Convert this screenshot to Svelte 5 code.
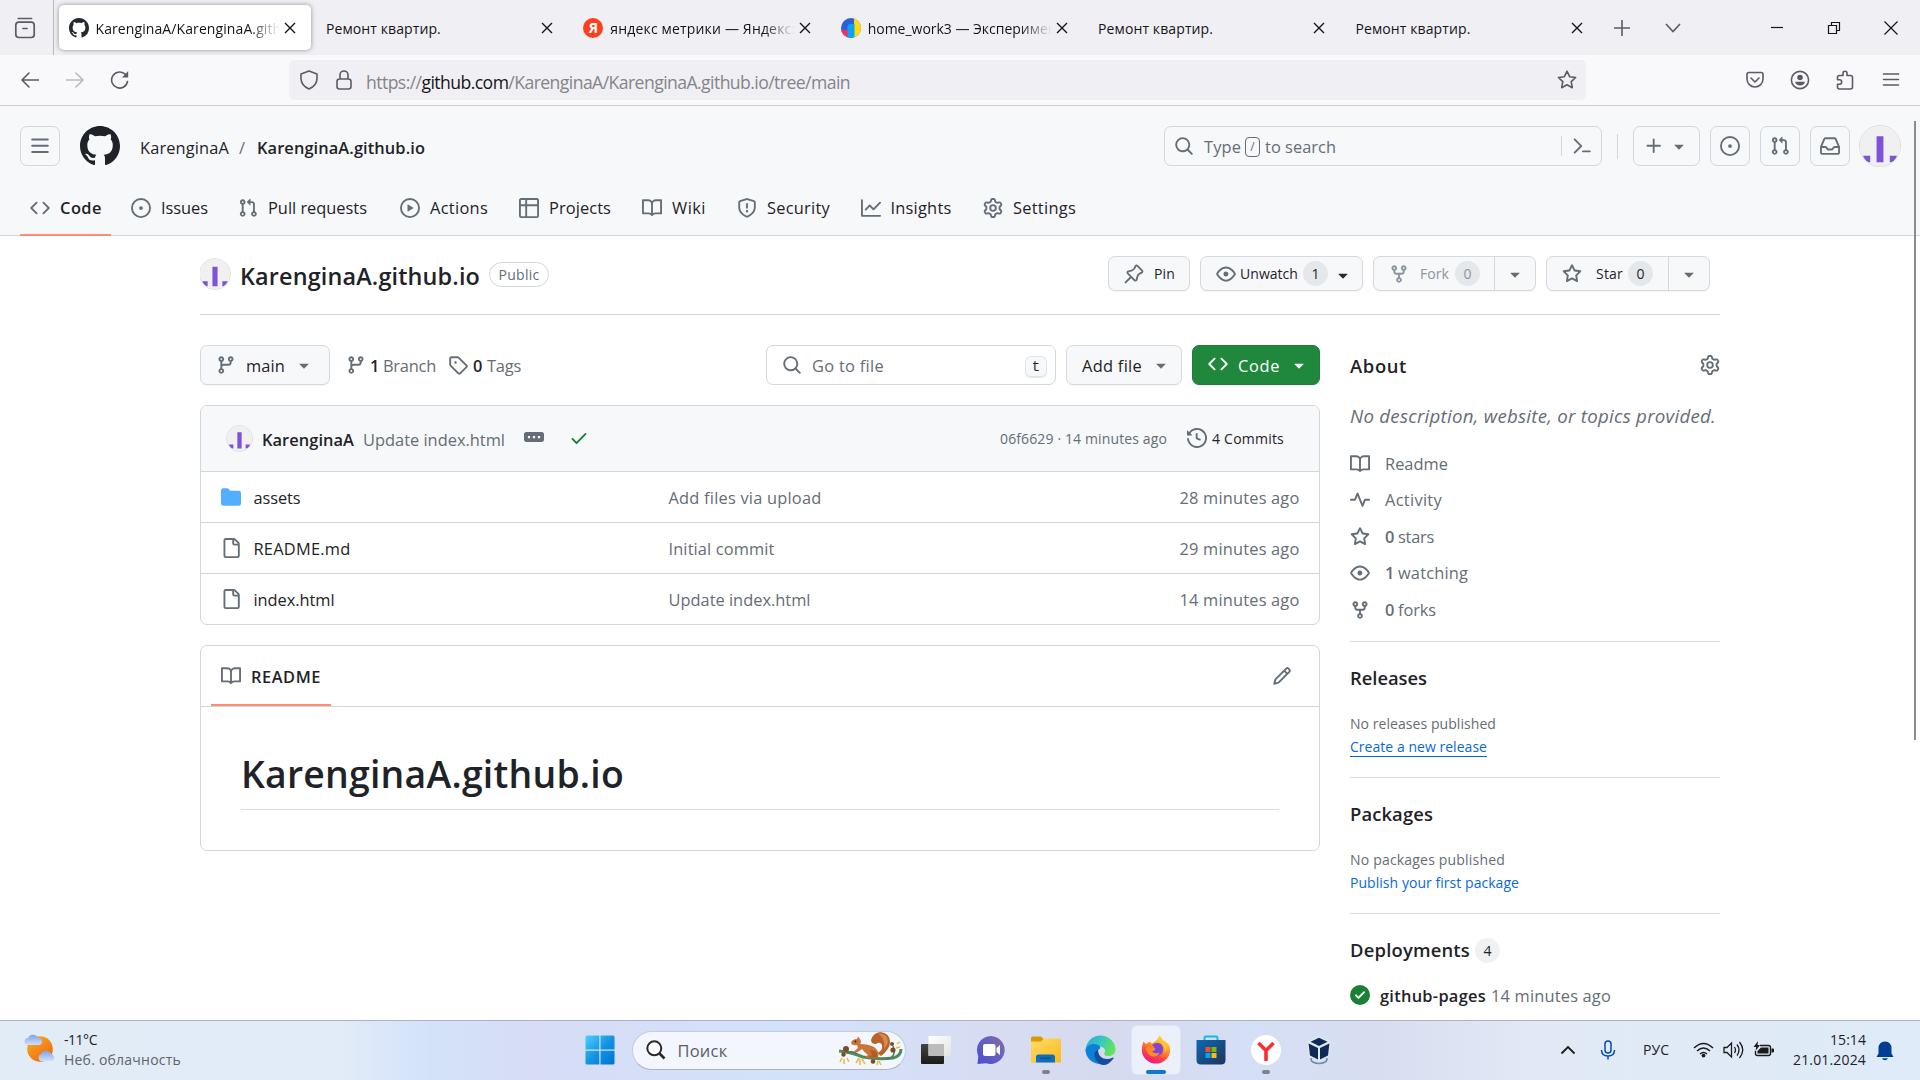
<script>
  function fit(node, width) {
    if (!width) return;
    const natural = node.getBoundingClientRect().width;
    const count = node.textContent.length;
    node.style.letterSpacing = (width - natural) / count + 'px';
    node.style.width = width + 'px';
  }

  const paths = {
    bars: 'M1 2.75A.75.75 0 0 1 1.75 2h12.5a.75.75 0 0 1 0 1.5H1.75A.75.75 0 0 1 1 2.75Zm0 5A.75.75 0 0 1 1.75 7h12.5a.75.75 0 0 1 0 1.5H1.75A.75.75 0 0 1 1 7.75ZM1.75 12h12.5a.75.75 0 0 1 0 1.5H1.75a.75.75 0 0 1 0-1.5Z',
    github: 'M8 0c4.42 0 8 3.58 8 8a8.013 8.013 0 0 1-5.45 7.59c-.4.08-.55-.17-.55-.38 0-.27.01-1.13.01-2.2 0-.75-.25-1.23-.54-1.48 1.78-.2 3.65-.88 3.65-3.95 0-.88-.31-1.59-.82-2.15.08-.2.36-1.02-.08-2.12 0 0-.67-.22-2.2.82-.64-.18-1.32-.27-2-.27-.68 0-1.36.09-2 .27-1.53-1.03-2.2-.82-2.2-.82-.44 1.1-.16 1.92-.08 2.12-.51.56-.82 1.28-.82 2.15 0 3.06 1.86 3.75 3.64 3.95-.23.2-.44.55-.51 1.07-.46.21-1.61.55-2.33-.66-.15-.24-.6-.83-1.23-.82-.67.01-.27.38.01.53.34.19.73.9.82 1.13.16.45.68 1.31 2.69.94 0 .67.01 1.3.01 1.49 0 .21-.15.45-.55.38A7.995 7.995 0 0 1 0 8c0-4.42 3.58-8 8-8Z',
    code: 'm11.28 3.22 4.25 4.25a.75.75 0 0 1 0 1.06l-4.25 4.25a.749.749 0 0 1-1.275-.326.749.749 0 0 1 .215-.734L13.94 8l-3.72-3.72a.749.749 0 0 1 .326-1.275.749.749 0 0 1 .734.215Zm-6.56 0a.751.751 0 0 1 1.042.018.751.751 0 0 1 .018 1.042L2.06 8l3.72 3.72a.749.749 0 0 1-.326 1.275.749.749 0 0 1-.734-.215L.47 8.53a.75.75 0 0 1 0-1.06Z',
    issue: 'M8 9.5a1.5 1.5 0 1 0 0-3 1.5 1.5 0 0 0 0 3ZM8 0a8 8 0 1 1 0 16A8 8 0 0 1 8 0ZM1.5 8a6.5 6.5 0 1 0 13 0 6.5 6.5 0 0 0-13 0Z',
    pr: 'M1.5 3.25a2.25 2.25 0 1 1 3 2.122v5.256a2.251 2.251 0 1 1-1.5 0V5.372A2.25 2.25 0 0 1 1.5 3.25Zm5.677-.177L9.573.677A.25.25 0 0 1 10 .854V2.5h1A2.5 2.5 0 0 1 13.5 5v5.628a2.251 2.251 0 1 1-1.5 0V5a1 1 0 0 0-1-1h-1v1.646a.25.25 0 0 1-.427.177L7.177 3.427a.25.25 0 0 1 0-.354ZM3.75 2.5a.75.75 0 1 0 0 1.5.75.75 0 0 0 0-1.5Zm0 9.5a.75.75 0 1 0 0 1.5.75.75 0 0 0 0-1.5Zm8.25.75a.75.75 0 1 0 1.5 0 .75.75 0 0 0-1.5 0Z',
    play: 'M8 0a8 8 0 1 1 0 16A8 8 0 0 1 8 0ZM1.5 8a6.5 6.5 0 1 0 13 0 6.5 6.5 0 0 0-13 0Zm4.879-2.773 4.264 2.559a.25.25 0 0 1 0 .428l-4.264 2.559A.25.25 0 0 1 6 10.559V5.442a.25.25 0 0 1 .379-.215Z',
    table: 'M0 1.75C0 .784.784 0 1.75 0h12.5C15.216 0 16 .784 16 1.75v12.5A1.75 1.75 0 0 1 14.25 16H1.75A1.75 1.75 0 0 1 0 14.25ZM6.5 6.5v8h7.75a.25.25 0 0 0 .25-.25V6.5Zm8-1.5V1.75a.25.25 0 0 0-.25-.25H6.5V5Zm-13 1.5v7.75c0 .138.112.25.25.25H5v-8ZM5 5V1.5H1.75a.25.25 0 0 0-.25.25V5Z',
    book: 'M0 1.75A.75.75 0 0 1 .75 1h4.253c1.227 0 2.317.59 3 1.501A3.743 3.743 0 0 1 11.006 1h4.245a.75.75 0 0 1 .75.75v10.5a.75.75 0 0 1-.75.75h-4.507a2.25 2.25 0 0 0-1.591.659l-.622.621a.75.75 0 0 1-1.06 0l-.622-.621A2.25 2.25 0 0 0 5.258 13H.75a.75.75 0 0 1-.75-.75Zm7.251 10.324.004-5.073-.002-2.253A2.25 2.25 0 0 0 5.003 2.5H1.5v9h3.757a3.75 3.75 0 0 1 1.994.574ZM8.755 4.75l-.004 7.322a3.752 3.752 0 0 1 1.992-.572H14.5v-9h-3.495a2.25 2.25 0 0 0-2.25 2.25Z',
    shield: 'M7.467.133a1.748 1.748 0 0 1 1.066 0l5.25 1.68A1.75 1.75 0 0 1 15 3.48V7c0 1.566-.32 3.182-1.303 4.682-.983 1.498-2.585 2.813-5.032 3.855a1.697 1.697 0 0 1-1.33 0c-2.447-1.042-4.049-2.357-5.032-3.855C1.32 10.182 1 8.566 1 7V3.48a1.755 1.755 0 0 1 1.217-1.667Zm.61 1.429a.25.25 0 0 0-.153 0l-5.25 1.68a.25.25 0 0 0-.174.238V7c0 1.358.275 2.666 1.057 3.86.784 1.194 2.121 2.34 4.366 3.297a.196.196 0 0 0 .154 0c2.245-.956 3.582-2.104 4.366-3.298C13.225 9.666 13.5 8.36 13.5 7V3.48a.251.251 0 0 0-.174-.237l-5.25-1.68ZM8.75 4.75v3a.75.75 0 0 1-1.5 0v-3a.75.75 0 0 1 1.5 0ZM9 10.5a1 1 0 1 1-2 0 1 1 0 0 1 2 0Z',
    graph: 'M1.5 1.75V13.5h13.75a.75.75 0 0 1 0 1.5H.75a.75.75 0 0 1-.75-.75V1.75a.75.75 0 0 1 1.5 0Zm14.28 2.53-5.25 5.25a.75.75 0 0 1-1.06 0L7 7.06 4.28 9.78a.751.751 0 0 1-1.042-.018.751.751 0 0 1-.018-1.042l3.25-3.25a.75.75 0 0 1 1.06 0L10 7.94l4.72-4.72a.751.751 0 0 1 1.042.018.751.751 0 0 1 .018 1.042Z',
    gear: 'M8 0a8.2 8.2 0 0 1 .701.031C9.444.095 9.99.645 10.16 1.29l.288 1.107c.018.066.079.158.212.224.231.114.454.243.668.386.123.082.233.09.299.071l1.103-.303c.644-.176 1.392.021 1.82.63.27.385.506.792.704 1.218.315.675.111 1.422-.364 1.891l-.814.806c-.049.048-.098.147-.088.294.016.257.016.515 0 .772-.01.147.038.246.088.294l.814.806c.475.469.679 1.216.364 1.891a7.977 7.977 0 0 1-.704 1.217c-.428.61-1.176.807-1.82.63l-1.102-.302c-.067-.019-.177-.011-.3.071a5.909 5.909 0 0 1-.668.386c-.133.066-.194.158-.211.224l-.29 1.106c-.168.646-.715 1.196-1.458 1.26a8.006 8.006 0 0 1-1.402 0c-.743-.064-1.289-.614-1.458-1.26l-.289-1.106c-.018-.066-.079-.158-.212-.224a5.738 5.738 0 0 1-.668-.386c-.123-.082-.233-.09-.299-.071l-1.103.303c-.644.176-1.392-.021-1.82-.63a8.12 8.12 0 0 1-.704-1.218c-.315-.675-.111-1.422.363-1.891l.815-.806c.05-.048.098-.147.088-.294a6.214 6.214 0 0 1 0-.772c.01-.147-.038-.246-.088-.294l-.815-.806C.635 6.045.431 5.298.746 4.623a7.92 7.92 0 0 1 .704-1.217c.428-.61 1.176-.807 1.82-.63l1.102.302c.067.019.177.011.3-.071.214-.143.437-.272.668-.386.133-.066.194-.158.211-.224l.29-1.106C6.009.645 6.556.095 7.299.03 7.53.01 7.764 0 8 0Zm-.571 1.525c-.036.003-.108.036-.137.146l-.289 1.105c-.147.561-.549.967-.998 1.189-.173.086-.34.183-.5.29-.417.278-.97.423-1.529.27l-1.103-.303c-.109-.03-.175.016-.195.045-.22.312-.412.644-.573.99-.014.031-.021.11.059.19l.815.806c.411.406.562.957.53 1.456a4.709 4.709 0 0 0 0 .582c.032.499-.119 1.05-.53 1.456l-.815.806c-.081.08-.073.159-.059.19.162.346.353.677.573.989.02.03.085.076.195.046l1.102-.303c.56-.153 1.113-.008 1.53.27.161.107.328.204.501.29.447.222.85.629.997 1.189l.289 1.105c.029.109.101.143.137.146a6.6 6.6 0 0 0 1.142 0c.036-.003.108-.036.137-.146l.289-1.105c.147-.561.549-.967.998-1.189.173-.086.34-.183.5-.29.417-.278.97-.423 1.529-.27l1.103.303c.109.029.175-.016.195-.045.22-.313.411-.644.573-.99.014-.031.021-.11-.059-.19l-.815-.806c-.411-.406-.562-.957-.53-1.456a4.709 4.709 0 0 0 0-.582c-.032-.499.119-1.05.53-1.456l.815-.806c.081-.08.073-.159.059-.19a6.464 6.464 0 0 0-.573-.989c-.02-.03-.085-.076-.195-.046l-1.102.303c-.56.153-1.113.008-1.53-.27a4.44 4.44 0 0 0-.501-.29c-.447-.222-.85-.629-.997-1.189l-.289-1.105c-.029-.11-.101-.143-.137-.146a6.6 6.6 0 0 0-1.142 0ZM11 8a3 3 0 1 1-6 0 3 3 0 0 1 6 0ZM9.5 8a1.5 1.5 0 1 0-3.001.001A1.5 1.5 0 0 0 9.5 8Z',
    search: 'M10.68 11.74a6 6 0 0 1-7.922-8.982 6 6 0 0 1 8.982 7.922l3.04 3.04a.749.749 0 0 1-.326 1.275.749.749 0 0 1-.734-.215ZM11.5 7a4.499 4.499 0 1 0-8.997 0A4.499 4.499 0 0 0 11.5 7Z',
    branch: 'M9.5 3.25a2.25 2.25 0 1 1 3 2.122V6A2.5 2.5 0 0 1 10 8.5H6a1 1 0 0 0-1 1v1.128a2.251 2.251 0 1 1-1.5 0V5.372a2.25 2.25 0 1 1 1.5 0v1.836A2.493 2.493 0 0 1 6 7h4a1 1 0 0 0 1-1v-.628A2.25 2.25 0 0 1 9.5 3.25Zm-6 0a.75.75 0 1 0 1.5 0 .75.75 0 0 0-1.5 0Zm8.25-.75a.75.75 0 1 0 0 1.5.75.75 0 0 0 0-1.5ZM4.25 12a.75.75 0 1 0 0 1.5.75.75 0 0 0 0-1.5Z',
    tag: 'M1 7.775V2.75C1 1.784 1.784 1 2.75 1h5.025c.464 0 .91.184 1.238.513l6.25 6.25a1.75 1.75 0 0 1 0 2.474l-5.026 5.026a1.75 1.75 0 0 1-2.474 0l-6.25-6.25A1.752 1.752 0 0 1 1 7.775Zm1.5 0c0 .066.026.13.073.177l6.25 6.25a.25.25 0 0 0 .354 0l5.025-5.025a.25.25 0 0 0 0-.354l-6.25-6.25a.25.25 0 0 0-.177-.073H2.75a.25.25 0 0 0-.25.25ZM6 5a1 1 0 1 1 0 2 1 1 0 0 1 0-2Z',
    pin: 'm11.294.984 3.722 3.722a1.75 1.75 0 0 1-.504 2.826l-1.327.613a3.089 3.089 0 0 0-1.707 2.084l-.584 2.454c-.317 1.332-1.972 1.8-2.94.832L5.75 11.311 1.78 15.28a.749.749 0 1 1-1.06-1.06l3.969-3.97-2.204-2.204c-.968-.968-.5-2.623.832-2.94l2.454-.584a3.08 3.08 0 0 0 2.084-1.707l.613-1.327a1.75 1.75 0 0 1 2.826-.504ZM6.283 9.723l2.732 2.731a.25.25 0 0 0 .42-.119l.584-2.454a4.586 4.586 0 0 1 2.537-3.098l1.328-.613a.25.25 0 0 0 .072-.404l-3.722-3.722a.25.25 0 0 0-.404.072l-.613 1.328a4.584 4.584 0 0 1-3.098 2.537l-2.454.584a.25.25 0 0 0-.119.42l2.731 2.732Z',
    eye: 'M8 2c1.981 0 3.671.992 4.933 2.078 1.27 1.091 2.187 2.345 2.637 3.023a1.62 1.62 0 0 1 0 1.798c-.45.678-1.367 1.932-2.637 3.023C11.67 13.008 9.981 14 8 14c-1.981 0-3.671-.992-4.933-2.078C1.797 10.83.88 9.576.43 8.898a1.62 1.62 0 0 1 0-1.798c.45-.677 1.367-1.931 2.637-3.022C4.33 2.992 6.019 2 8 2ZM1.679 7.932a.12.12 0 0 0 0 .136c.411.622 1.241 1.75 2.366 2.717C5.176 11.758 6.527 12.5 8 12.5c1.473 0 2.825-.742 3.955-1.715 1.124-.967 1.954-2.096 2.366-2.717a.12.12 0 0 0 0-.136c-.412-.621-1.242-1.75-2.366-2.717C10.824 4.242 9.473 3.5 8 3.5c-1.473 0-2.825.742-3.955 1.715-1.124.967-1.954 2.096-2.366 2.717ZM8 10a2 2 0 1 1-.001-3.999A2 2 0 0 1 8 10Z',
    fork: 'M5 5.372v.878c0 .414.336.75.75.75h4.5a.75.75 0 0 0 .75-.75v-.878a2.25 2.25 0 1 1 1.5 0v.878a2.25 2.25 0 0 1-2.25 2.25h-1.5v2.128a2.251 2.251 0 1 1-1.5 0V8.5h-1.5A2.25 2.25 0 0 1 3.5 6.25v-.878a2.25 2.25 0 1 1 1.5 0ZM5 3.25a.75.75 0 1 0-1.5 0 .75.75 0 0 0 1.5 0Zm6.75.75a.75.75 0 1 0 0-1.5.75.75 0 0 0 0 1.5Zm-3 8.75a.75.75 0 1 0-1.5 0 .75.75 0 0 0 1.5 0Z',
    star: 'M8 .25a.75.75 0 0 1 .673.418l1.882 3.815 4.21.612a.75.75 0 0 1 .416 1.279l-3.046 2.97.719 4.192a.751.751 0 0 1-1.088.791L8 12.347l-3.766 1.98a.75.75 0 0 1-1.088-.79l.72-4.194L.818 6.374a.75.75 0 0 1 .416-1.28l4.21-.611L7.327.668A.75.75 0 0 1 8 .25Zm0 2.445L6.615 5.5a.75.75 0 0 1-.564.41l-3.097.45 2.24 2.184a.75.75 0 0 1 .216.664l-.528 3.084 2.769-1.456a.75.75 0 0 1 .698 0l2.77 1.456-.53-3.084a.75.75 0 0 1 .216-.664l2.24-2.183-3.096-.45a.75.75 0 0 1-.564-.41L8 2.694Z',
    caret: 'm4.427 7.427 3.396 3.396a.25.25 0 0 0 .354 0l3.396-3.396A.25.25 0 0 0 11.396 7H4.604a.25.25 0 0 0-.177.427Z',
    plus: 'M7.75 2a.75.75 0 0 1 .75.75V7h4.25a.75.75 0 0 1 0 1.5H8.5v4.25a.75.75 0 0 1-1.5 0V8.5H2.75a.75.75 0 0 1 0-1.5H7V2.75A.75.75 0 0 1 7.75 2Z',
    inbox: 'M2.8 2.06A1.75 1.75 0 0 1 4.41 1h7.18c.7 0 1.333.417 1.61 1.06l2.74 6.395c.04.093.06.194.06.295v4.5A1.75 1.75 0 0 1 14.25 15H1.75A1.75 1.75 0 0 1 0 13.25v-4.5c0-.101.02-.202.06-.295Zm1.61.44a.25.25 0 0 0-.23.152L1.887 8H4.75a.75.75 0 0 1 .6.3L6.625 10h2.75l1.275-1.7a.75.75 0 0 1 .6-.3h2.863L11.82 2.652a.25.25 0 0 0-.23-.152Zm10.09 7h-2.875l-1.275 1.7a.75.75 0 0 1-.6.3h-3.5a.75.75 0 0 1-.6-.3L4.375 9.5H1.5v3.75c0 .138.112.25.25.25h12.5a.25.25 0 0 0 .25-.25Z',
    terminal: 'm6.354 8.04-4.773 4.773a.75.75 0 1 0 1.061 1.06L7.945 8.57a.75.75 0 0 0 0-1.06L2.642 2.206a.75.75 0 0 0-1.06 1.061L6.353 8.04ZM8.75 11.5a.75.75 0 0 0 0 1.5h5.5a.75.75 0 0 0 0-1.5h-5.5Z',
    file: 'M2 1.75C2 .784 2.784 0 3.75 0h6.586c.464 0 .909.184 1.237.513l2.914 2.914c.329.328.513.773.513 1.237v9.586A1.75 1.75 0 0 1 13.25 16h-9.5A1.75 1.75 0 0 1 2 14.25Zm1.75-.25a.25.25 0 0 0-.25.25v12.5c0 .138.112.25.25.25h9.5a.25.25 0 0 0 .25-.25V6h-2.75A1.75 1.75 0 0 1 9 4.25V1.5Zm6.75.062V4.25c0 .138.112.25.25.25h2.688l-.011-.013-2.914-2.914-.013-.011Z',
    folder: 'M1.75 1A1.75 1.75 0 0 0 0 2.75v10.5C0 14.216.784 15 1.75 15h12.5A1.75 1.75 0 0 0 16 13.25v-8.5A1.75 1.75 0 0 0 14.25 3H7.5a.25.25 0 0 1-.2-.1l-.9-1.2C6.07 1.26 5.55 1 5 1H1.75Z',
    check: 'M13.78 4.22a.75.75 0 0 1 0 1.06l-7.25 7.25a.75.75 0 0 1-1.06 0L2.22 9.28a.751.751 0 0 1 .018-1.042.751.751 0 0 1 1.042-.018L6 10.94l6.72-6.72a.75.75 0 0 1 1.06 0Z',
    history: 'm.427 1.927 1.215 1.215a8.002 8.002 0 1 1-1.6 5.685.75.75 0 1 1 1.493-.154 6.5 6.5 0 1 0 1.18-4.458l1.358 1.358A.25.25 0 0 1 3.896 6H.25A.25.25 0 0 1 0 5.75V2.104a.25.25 0 0 1 .427-.177ZM7.75 4a.75.75 0 0 1 .75.75v2.992l2.028.812a.75.75 0 0 1-.557 1.392l-2.5-1A.751.751 0 0 1 7 8.25v-3.5A.75.75 0 0 1 7.75 4Z',
    pencil: 'M11.013 1.427a1.75 1.75 0 0 1 2.474 0l1.086 1.086a1.75 1.75 0 0 1 0 2.474l-8.61 8.61c-.21.21-.47.364-.756.445l-3.251.93a.75.75 0 0 1-.927-.928l.929-3.25c.081-.286.235-.547.445-.758l8.61-8.61Zm.176 4.823L9.75 4.81l-6.286 6.287a.253.253 0 0 0-.064.108l-.558 1.953 1.953-.558a.253.253 0 0 0 .108-.064Zm1.238-3.763a.25.25 0 0 0-.354 0L10.811 3.75l1.439 1.44 1.263-1.263a.25.25 0 0 0 0-.354Z',
    pulse: 'M6 2c.306 0 .582.187.696.471L10 10.731l1.304-3.26A.751.751 0 0 1 12 7h3.25a.75.75 0 0 1 0 1.5h-2.742l-1.812 4.528a.751.751 0 0 1-1.392 0L6 4.77 4.696 8.03A.75.75 0 0 1 4 8.5H.75a.75.75 0 0 1 0-1.5h2.742l1.812-4.529A.751.751 0 0 1 6 2Z',
    done: 'M8 16A8 8 0 1 1 8 0a8 8 0 0 1 0 16Zm3.78-9.72a.751.751 0 0 0-.018-1.042.751.751 0 0 0-1.042-.018L6.75 9.19 5.28 7.72a.751.751 0 0 0-1.042.018.751.751 0 0 0-.018 1.042l2 2a.75.75 0 0 0 1.06 0Z',
    ellipsis: 'M1.75 4h12.5C15.2 4 16 4.8 16 5.75v4.5C16 11.2 15.2 12 14.25 12H1.75C.8 12 0 11.2 0 10.25v-4.5C0 4.8.8 4 1.75 4ZM3.1 7.1v1.8h1.8V7.1Zm4 0v1.8h1.8V7.1Zm4 0v1.8h1.8V7.1Z'
  };

  const tabs = [
    { title: 'KarenginaA/KarenginaA.github.io', icon: 'gh', active: true, w: 219 },
    { title: 'Ремонт квартир.', w: 115 },
    { title: 'яндекс метрики — Яндекс:', icon: 'ya', w: 185 },
    { title: 'home_work3 — Эксперимен', icon: 'metrica', w: 189 },
    { title: 'Ремонт квартир.', w: 115 },
    { title: 'Ремонт квартир.', w: 115 }
  ];

  // `span` is the whole width of the item in the navigation row.
  const nav = [
    { icon: 'code', label: 'Code', w: 42, span: 101, active: true },
    { icon: 'issue', label: 'Issues', w: 47, span: 107 },
    { icon: 'pr', label: 'Pull requests', w: 99, span: 162 },
    { icon: 'play', label: 'Actions', w: 58, span: 119 },
    { icon: 'table', label: 'Projects', w: 62, span: 123 },
    { icon: 'book', label: 'Wiki', w: 34, span: 95 },
    { icon: 'shield', label: 'Security', w: 63, span: 123.5 },
    { icon: 'graph', label: 'Insights', w: 61, span: 122.5 },
    { icon: 'gear', label: 'Settings', w: 63, span: 103 }
  ];

  const files = [
    { icon: 'folder', name: 'assets', nw: 47, msg: 'Add files via upload', mw: 153, ago: '28 minutes ago', aw: 120 },
    { icon: 'file', name: 'README.md', nw: 97, msg: 'Initial commit', mw: 106, ago: '29 minutes ago', aw: 120 },
    { icon: 'file', name: 'index.html', nw: 81, msg: 'Update index.html', mw: 142, ago: '14 minutes ago', aw: 120 }
  ];

  const facts = [
    { icon: 'book', label: 'Readme', w: 63 },
    { icon: 'pulse', label: 'Activity', w: 57 },
    { icon: 'star', count: '0', label: 'stars', w: 36 },
    { icon: 'eye', count: '1', label: 'watching', w: 70 },
    { icon: 'fork', count: '0', label: 'forks', w: 38 }
  ];
</script>

{#snippet ico(name, cls = '')}
  <svg class="ico {cls}" viewBox="0 0 16 16"><path fill-rule="evenodd" d={paths[name]} /></svg>
{/snippet}

{#snippet tx(text, w, cls = '')}
  <span class="t {cls}" use:fit={w}>{text}</span>
{/snippet}

{#snippet avatar(cls)}
  <svg class="avatar {cls}" viewBox="0 0 42 42">
    <rect width="42" height="42" fill="#f0f0f0" />
    <path d="M17.4 10.7h7.2V38h-7.2zM3.5 31.2h7.2V38H3.5zM31.3 31.2h7.2V38h-7.2z" fill="#7f50d8" />
  </svg>
{/snippet}

<div class="screen">
  <div class="tabbar">
    <div class="view">
      <svg class="i22" viewBox="0 0 22 22"><g fill="none" stroke="#5b5b66" stroke-width="1.7" stroke-linecap="round" stroke-linejoin="round"><path d="M4.3 1.5h13.2M1.8 8.2q0-3 3-3h12.4q3 0 3 3v9.3q0 3-3 3H4.8q-3 0-3-3zM9 11.5h4" /></g></svg>
    </div>
    {#each tabs as tab}
      <div class="tab" class:active={tab.active}>
        {#if tab.icon === 'gh'}
          <span class="fav">{@render ico('github', 'dark')}</span>
        {:else if tab.icon === 'ya'}
          <span class="fav ya"><b>Я</b></span>
        {:else if tab.icon === 'metrica'}
          <svg class="fav metrica" viewBox="0 0 20 20"><rect width="20" height="20" fill="#2f61d5" /><path d="M13 0h7v20h-7z" fill="#ffdb0f" /><path d="M0 12h7v8H0z" fill="#ff2d55" /><path d="M6.500 20V9q0-3 3-3h4v14z" fill="#06a4fb" /></svg>
        {/if}
        <span class="title" class:fade={tab.icon}>{@render tx(tab.title, tab.w)}</span>
        <svg class="close" viewBox="0 0 12 12"><path d="M1 1l10 10M11 1L1 11" /></svg>
      </div>
    {/each}
    <div class="cell c43"><svg class="line" width="16" height="16" viewBox="0 0 16 16"><path d="M8 0v16M0 8h16" /></svg></div>
    <div class="cell c59"><svg class="line" width="16" height="10" viewBox="0 0 16 10"><path d="M1 1l7 7.5L15 1" /></svg></div>
    <div class="window">
      <svg width="14" height="14" viewBox="0 0 14 14"><path d="M1 6.5h12" /></svg>
      <svg width="14" height="14" viewBox="0 0 14 14"><path d="M1.5 4.5h8v8h-8zM4.5 4.5v-3h8v8h-3" /></svg>
      <svg width="14" height="14" viewBox="0 0 14 14"><path d="M.5.5l13 13M13.500.5l-13 13" /></svg>
    </div>
  </div>

  <div class="toolbar">
    <div class="nav-buttons">
      <svg width="18" height="16" viewBox="0 0 18 16"><path d="M17.500 8H1M8 1L1 8l7 7" /></svg>
      <svg class="off" width="18" height="16" viewBox="0 0 18 16"><path d="M.5 8H17M10 1l7 7-7 7" /></svg>
      <svg width="20" height="20" viewBox="0 0 20 20"><path d="M17.500 11.500A8 8 0 1 1 14.500 3.700L16 5" /><path class="solid" d="M18.200 1v6.600H12z" /></svg>
    </div>
    <div class="url">
      <svg class="shieldy" width="20" height="20" viewBox="0 0 20 20"><path d="M10 1l8 3v4.500c0 4-2.500 8-8 10.500C4.500 16.500 2 12.500 2 8.500V4z" /></svg>
      <svg width="16" height="20" viewBox="0 0 16 20"><path d="M4 9V5a4 4 0 0 1 8 0v4M1 11.500Q1 9 3.500 9h9Q15 9 15 11.500v5q0 2.500-2.500 2.500h-9Q1 19 1 16.500z" /></svg>
      <span class="t address" use:fit={484}>https://<b>github.com</b>/KarenginaA/KarenginaA.github.io/tree/main</span>
      <svg class="fav-star" width="20" height="20" viewBox="0 0 20 20"><path d="M10 1.200l2.600 5.500 6 .800-4.400 4.200 1.100 6-5.300-2.900-5.300 2.900 1.100-6L1.400 7.500l6-.800z" /></svg>
    </div>
    <div class="tools">
      <svg width="20" height="20" viewBox="0 0 20 20"><path d="M4 2.500h12q2 0 2 2V9a8 8 0 0 1-16 0V4.500q0-2 2-2zM6 8l4 4 4-4" /></svg>
      <svg width="20" height="20" viewBox="0 0 20 20"><circle cx="10" cy="10" r="8.600" /><circle class="solid" cx="10" cy="7.500" r="2.800" /><path class="solid" d="M5 11.800h10q-1 3.800-5 3.800t-5-3.800z" /></svg>
      <svg width="20" height="20" viewBox="0 0 20 20"><path d="M2.500 7.500q0-2 2-2H8V3.300a2 2 0 0 1 4 0v2.200h3.500q2 0 2 2V17q0 2-2 2h-11q-2 0-2-2v-2.800h2a2.200 2.200 0 0 0 0-4.400h-2z" /></svg>
      <svg width="20" height="20" viewBox="0 0 20 20"><path d="M2.500 4h15M2.500 9.500h15M2.500 15h15" /></svg>
    </div>
  </div>

  <header>
    <div class="top">
      <div class="sq">{@render ico('bars')}</div>
      {@render ico('github', 'logo')}
      <div class="crumb">
        {@render tx('KarenginaA', 89)}
        {@render tx('/', 8, 'muted')}
        {@render tx('KarenginaA.github.io', 168, 'semi')}
      </div>
      <div class="search">
        {@render ico('search')}
        {@render tx('Type', 37, 'muted')}
        <span class="slash">/</span>
        {@render tx('to search', 71, 'muted')}
        <span class="cmd">{@render ico('terminal')}</span>
      </div>
      <div class="vline"></div>
      <div class="sq add">{@render ico('plus')}{@render ico('caret')}</div>
      <div class="sq">{@render ico('issue')}</div>
      <div class="sq">{@render ico('pr')}</div>
      <div class="sq">{@render ico('inbox')}</div>
      {@render avatar('a41')}
    </div>
    <nav>
      {#each nav as item}
        <div class="slot" style:width="{item.span}px">
          <div class="item" class:on={item.active}>
            {@render ico(item.icon)}
            {@render tx(item.label, item.w, item.active ? 'semi' : '')}
          </div>
        </div>
      {/each}
    </nav>
  </header>

  <main>
    <div class="repo">
      {@render avatar('a31')}
      {@render tx('KarenginaA.github.io', 240, 'name')}
      <span class="pill">{@render tx('Public', 41, 'small muted')}</span>
      <div class="actions">
        <div class="btn pin">{@render ico('pin')}{@render tx('Pin', 21, 'small')}</div>
        <div class="btn watch">{@render ico('eye')}{@render tx('Unwatch', 58, 'small')}<span class="count">1</span>{@render ico('caret', 'dark')}</div>
        <div class="btn split">
          <div class="half dim">{@render ico('fork')}{@render tx('Fork', 29, 'small')}<span class="count">0</span></div>
          <div class="drop">{@render ico('caret')}</div>
        </div>
        <div class="btn split">
          <div class="half starred">{@render ico('star')}{@render tx('Star', 27, 'small')}<span class="count">0</span></div>
          <div class="drop">{@render ico('caret')}</div>
        </div>
      </div>
    </div>

    <div class="columns">
      <section class="left">
        <div class="bar">
          <div class="btn big branch">{@render ico('branch')}{@render tx('main', 39)}{@render ico('caret')}</div>
          <div class="refs">
            {@render ico('branch')}{@render tx('1', 10, 'semi')}{@render tx('Branch', 53, 'muted')}
            <span class="tagref">{@render ico('tag')}{@render tx('0', 10, 'semi')}{@render tx('Tags', 34, 'muted')}</span>
          </div>
          <div class="goto">{@render ico('search')}{@render tx('Go to file', 72, 'muted')}<kbd>t</kbd></div>
          <div class="btn big addfile">{@render tx('Add file', 60)}{@render ico('caret')}</div>
          <div class="btn big green">{@render ico('code')}{@render tx('Code', 42)}{@render ico('caret')}</div>
        </div>

        <div class="box">
          <div class="latest">
            {@render avatar('a27')}
            {@render tx('KarenginaA', 92, 'semi')}
            {@render tx('Update index.html', 142, 'muted')}
            {@render ico('ellipsis', 'dots')}
            {@render ico('check', 'ok')}
            <div class="right">
              {@render tx('06f6629 · 14 minutes ago', 167, 'small muted')}
              {@render ico('history')}
              {@render tx('4 Commits', 72, 'small')}
            </div>
          </div>
          {#each files as f}
            <div class="row">
              {@render ico(f.icon, f.icon)}
              <span class="fname">{@render tx(f.name, f.nw)}</span>
              <span class="fmsg">{@render tx(f.msg, f.mw, 'muted')}</span>
              {@render tx(f.ago, f.aw, 'muted')}
            </div>
          {/each}
        </div>

        <div class="box readme">
          <div class="rhead">
            <div class="rtab">{@render ico('book')}{@render tx('README', 70, 'semi')}</div>
            {@render ico('pencil')}
          </div>
          <div class="rbody">
            <h1>{@render tx('KarenginaA.github.io', 383, 'h1')}</h1>
          </div>
        </div>
      </section>

      <aside>
        <div class="about">{@render tx('About', 57, 'h2')}{@render ico('gear')}</div>
        <div class="desc">{@render tx('No description, website, or topics provided.', 366, 'ital muted')}</div>
        <ul>
          {#each facts as f}
            <li>
              {@render ico(f.icon)}
              {#if f.count}{@render tx(f.count, 10, 'semi muted')}{/if}
              {@render tx(f.label, f.w, 'muted')}
            </li>
          {/each}
        </ul>
        <div class="side">
          <div class="sh">{@render tx('Releases', 77, 'h2')}</div>
          <div class="sl">{@render tx('No releases published', 146, 'small muted')}</div>
          <div class="sl"><span class="under">{@render tx('Create a new release', 137, 'small link')}</span></div>
        </div>
        <div class="side">
          <div class="sh">{@render tx('Packages', 83, 'h2')}</div>
          <div class="sl">{@render tx('No packages published', 155, 'small muted')}</div>
          <div class="sl">{@render tx('Publish your first package', 169, 'small link')}</div>
        </div>
        <div class="side">
          <div class="sh">{@render tx('Deployments', 120, 'h2')}<span class="count pale">4</span></div>
          <div class="deploy">{@render ico('done', 'ok')}{@render tx('github-pages', 106, 'semi')}{@render tx('14 minutes ago', 120, 'muted')}</div>
        </div>
      </aside>
    </div>
  </main>
  <div class="scroll"></div>

  <footer>
    <div class="weather">
      <svg width="32" height="30" viewBox="0 0 32 30">
        <defs>
          <linearGradient id="sun" x1="0" y1="0" x2=".8" y2="1"><stop offset="0" stop-color="#f3b22c" /><stop offset="1" stop-color="#f2660c" /></linearGradient>
          <linearGradient id="cloud" x1="0" y1="0" x2="0" y2="1"><stop offset="0" stop-color="#7ea3e8" /><stop offset="1" stop-color="#d0dffa" /></linearGradient>
        </defs>
        <circle cx="16" cy="16" r="12.800" fill="url(#sun)" />
        <path d="M4 12a3.500 3.500 0 0 1 0-7 5.500 5.500 0 0 1 10 0 3.500 3.500 0 0 1 1 7z" fill="url(#cloud)" />
        <path d="M17 28a3.700 3.700 0 0 1 0-7 5.500 5.500 0 0 1 10 0 3.700 3.700 0 0 1 1 7z" fill="url(#cloud)" />
      </svg>
      <div class="wtext">
        {@render tx('-11°C', 33, 'small')}
        {@render tx('Неб. облачность', 117, 'small grey')}
      </div>
    </div>

    <div class="apps">
      <svg class="start" width="30" height="30" viewBox="0 0 30 30">
        <defs><linearGradient id="win" x1="0" y1="0" x2="1" y2="1"><stop offset="0" stop-color="#4fd0fb" /><stop offset=".5" stop-color="#1495e2" /><stop offset="1" stop-color="#0272d2" /></linearGradient></defs>
        <path d="M2 .5h12.300v14H.5V2Q.5.5 2 .5zM15.500.5H28Q29.500.5 29.500 2v12.500h-14zM.5 15.700h13.800v13.800H2Q.5 29.500.5 28zM15.500 15.700h14V28q0 1.500-1.500 1.500H15.500z" fill="url(#win)" />
      </svg>
      <div class="find">
        <svg width="20" height="20" viewBox="0 0 20 20"><circle cx="8.300" cy="8.300" r="7" fill="#fff" stroke="#2a2a2c" stroke-width="2" /><path d="M13.500 13.500l5 5" stroke="#2a2a2c" stroke-width="2.600" /></svg>
        {@render tx('Поиск', 50, 'grey search-word')}
        <svg class="squirrel" width="66" height="36" viewBox="0 0 66 36">
          <path d="M2 19Q14 20 26 25Q42 28 56 26Q64 24 64 17" fill="none" stroke="#4f8a5c" stroke-width="3" />
          <path d="M10 21Q16 18 20 22M50 27Q60 25 56 14" fill="none" stroke="#4d7b4a" stroke-width="1.500" />
          <path d="M40 21Q46 19 45 13Q43 9 39 12Q34 12 34 8Q36 1 43 0Q53 1 53 10Q53 17 44 24z" fill="#b9632a" />
          <path d="M41 1.500Q51 1 51 10Q50 14 47 17Q49 7 41 1.500z" fill="#d98a4c" />
          <path d="M14 11Q15 7 20 7L21 4.500 23 7Q25 10 23 12Q31 12 37 15Q43 19 41 26H30Q27 25 31 23Q27 20 25 17L20 20.500 17 19.500 21 16 20 13Q15 14 14 11z" fill="#c97537" />
          <path d="M33 18Q41 17 40.500 25.500H31Q32 23 35 23Z" fill="#b05c26" />
          <circle cx="18.500" cy="9.500" r=".9" fill="#222" />
          <g fill="#7a4b2a"><circle cx="9" cy="17" r="3" /><circle cx="6.500" cy="22.500" r="2.200" /><circle cx="36" cy="29.500" r="2.300" /><circle cx="55" cy="12" r="2" /><circle cx="56" cy="18" r="2.600" /></g>
          <g stroke="#e9b94e" stroke-width="1.500" fill="none"><path d="M5 26l-2 4M7 27l0 5M10 26l2 4M22 26l-3 5M23 27l0 6M25 27l3 5M42 29l2 4M41 29l-1 4M60 12l3-2M59 16l4-1" /></g>
        </svg>
      </div>
      <div class="app"><svg width="32" height="30" viewBox="0 0 32 30">
        <defs><linearGradient id="tv" x1="0" y1="0" x2="0" y2="1"><stop offset="0" stop-color="#44443f" /><stop offset="1" stop-color="#1b1b1b" /></linearGradient><linearGradient id="tw" x1="0" y1="0" x2="1" y2="1"><stop offset="0" stop-color="#fff" /><stop offset="1" stop-color="#e4e4e4" /></linearGradient></defs>
        <rect x="1" y="9" width="23" height="20" rx="1" fill="url(#tv)" /><rect x="8.500" y="1" width="22.500" height="20" rx="1" fill="url(#tw)" /><path d="M8.500 9H24v12H8.500z" fill="#bcbcbc" />
      </svg></div>
      <div class="app"><svg width="30" height="30" viewBox="0 0 30 30">
        <defs><linearGradient id="chat" x1="1" y1="0" x2="0" y2="1"><stop offset="0" stop-color="#8d6a98" /><stop offset=".4" stop-color="#6763c0" /><stop offset="1" stop-color="#4b4bd0" /></linearGradient></defs>
        <path d="M15 1a14 14 0 1 1-5 27.200L1.500 29l.8-8A14 14 0 0 1 15 1z" fill="url(#chat)" /><rect x="7" y="9" width="12.500" height="12" rx="2" fill="#fff" /><path d="M20.500 13l3.500-3v10l-3.500-3z" fill="#fff" />
      </svg></div>
      <div class="app"><svg width="32" height="30" viewBox="0 0 32 30">
        <defs><linearGradient id="fold" x1="0" y1="0" x2="1" y2="1"><stop offset="0" stop-color="#ffdc66" /><stop offset="1" stop-color="#fbb91d" /></linearGradient></defs>
        <path d="M1 3q0-1.500 1.500-1.500H11L13.500 4v6H1z" fill="#d99a04" /><path d="M1 6.500h10L14 3.500h15.500q1.500 0 1.500 1.500v22.500H1z" fill="url(#fold)" /><path d="M6 27.500V22q0-2.500 2.500-2.500h14Q25 19.500 25 22v5.500z" fill="#0a70bd" /><path d="M10.500 23.200h10" stroke="#1a4e80" stroke-width="1.400" />
      </svg><i class="dot"></i></div>
      <div class="app"><svg width="31" height="31" viewBox="0 0 31 31">
        <defs><linearGradient id="edge" x1="0" y1="0" x2="1" y2=".4"><stop offset="0" stop-color="#2aa7dd" /><stop offset=".5" stop-color="#35c4c9" /><stop offset="1" stop-color="#62e35c" /></linearGradient></defs>
        <path d="M15.500.5a15 15 0 0 1 15 13.500c0 4.500-3 7-7 7-3 0-5-1-4-3 1.500-3 0-6-5-6.500C8 11 2 14 .6 17A15 15 0 0 1 15.500.5z" fill="url(#edge)" />
        <path d="M.5 15.500C2 9.500 7.500 8 12 9.500c3.500 1.200 4 3.500 2.500 4.500-4 2-3.500 9 4 12 2 .8 4 .6 6 0A15 15 0 0 1 .5 15.500z" fill="#0c7fd9" />
        <path d="M13 14.500c-5 2-5 10 2 14.500 4 2.500 9 .5 13.500-5.500.4-.8-.2-1.200-1-.8-6 3-14.500 1-14.500-8.200z" fill="#104f9f" />
      </svg></div>
      <div class="app current"><svg width="30" height="30" viewBox="0 0 30 30">
        <defs><linearGradient id="ff" x1=".8" y1="0" x2=".3" y2="1"><stop offset="0" stop-color="#fff04a" /><stop offset=".35" stop-color="#ffa51f" /><stop offset=".7" stop-color="#ff4446" /><stop offset="1" stop-color="#e8148a" /></linearGradient></defs>
        <path d="M2.500 6.500L5 9Q7 7 9.500 6.500Q9 8 11 8.500Q15 7 17 3L18.500.5Q20 4 23 6.500L24 5.500Q25 7 26 8.500L27 8Q29.500 12 29.200 16A14.300 14.300 0 0 1 .8 16Q.8 10 2.500 6.500z" fill="url(#ff)" />
        <path d="M11 10Q15 6.500 20 9Q24 14 20.500 19Q15 23 10.500 19Q8 16 10 14L14 13.800Q13 11 11 10z" fill="#7c45d8" />
        <path d="M4.500 13Q8 10.500 10 13Q13 12 14.500 14Q13 16 11 16.500Q14 19.500 18.500 17.500Q17 22 12 21.500Q6 20 4.500 13z" fill="#ff8a2a" />
        <path d="M18.500.5Q17 6 21.500 9Q25 13 23 18Q27 15 25.500 10Z" fill="#ffc53a" />
      </svg><i class="line-on"></i></div>
      <div class="app"><svg width="30" height="30" viewBox="0 0 30 30">
        <defs><linearGradient id="store" x1="0" y1="0" x2="1" y2="1"><stop offset="0" stop-color="#0c68b5" /><stop offset="1" stop-color="#20345c" /></linearGradient></defs>
        <path d="M8.500 6V2.800Q8.500 1.500 10 1.500h10q1.500 0 1.500 1.300V6" fill="none" stroke="#19b5f0" stroke-width="2" /><path d="M.5 5h29v20q0 4.500-4.500 4.500H5Q.5 29.500.5 25z" fill="url(#store)" />
        <path d="M9.500 12h5v5h-5z" fill="#f05022" /><path d="M15.500 12h5v5h-5z" fill="#7dba00" /><path d="M9.500 18h5v5h-5z" fill="#05a6f0" /><path d="M15.500 18h5v5h-5z" fill="#ffba08" />
      </svg></div>
      <div class="app"><svg width="30" height="30" viewBox="0 0 30 30"><circle cx="15" cy="15" r="15" fill="#fff" /><path d="M7.500 8L15 15.500 22.500 8M15 15v11" fill="none" stroke="#f92e32" stroke-width="3.600" /></svg><i class="dot"></i></div>
      <div class="app nudge"><svg width="28" height="30" viewBox="0 0 28 30">
        <ellipse cx="14" cy="24.500" rx="8" ry="4" fill="none" stroke="#7488a8" stroke-width="1.600" /><path d="M14 1l12 5.500-1.500 15L14 27 3.500 21.500 2 6.500z" fill="#dfe7f2" /><path d="M14 2.800l8.500 4L14 11 5.500 6.800zM3.600 8.500L13 13v11.500L5 20.500zM24.400 8.500L15 13v11.500l8-4z" fill="#0e2b58" />
      </svg></div>
    </div>

    <div class="tray">
      <svg class="up" width="16" height="10" viewBox="0 0 16 10"><path d="M1.500 8.500L8 2l6.500 6.500" stroke-width="1.800" /></svg>
      <svg class="mic" width="16" height="20" viewBox="0 0 16 20"><path d="M8 1q3 0 3 3v6q0 3-3 3t-3-3V4q0-3 3-3zM1.500 10Q1.500 16 8 16t6.500-6M8 16v3.500" stroke-width="1.500" /></svg>
      {@render tx('РУС', 26, 'small lang')}
      <svg width="21" height="16" viewBox="0 0 21 16"><g stroke-width="1.500"><path d="M1 6q9.500-9 19 0M4 9q6.500-6 13 0M7 12q3.500-3 7 0" /></g><circle class="fill" cx="10.500" cy="13.600" r="1.900" /></svg>
      <svg width="21" height="18" viewBox="0 0 21 18"><path d="M1 6.500h3L8.500 2v14L4 11.500H1zM11.500 6q2 3 0 6M14 3.500q4 5.500 0 11M16.500 1q6.500 8 0 16" stroke-width="1.300" /></svg>
      <svg width="21" height="17" viewBox="0 0 21 17"><path d="M7 4.500h8.500q2 0 2 2v6q0 2-2 2h-11q-2 0-2-2V10" stroke-width="1.400" /><path class="fill" d="M8 6.500h7.500v6h-11V10zM18.500 7.500H20q1 0 1 1v2q0 1-1 1h-1.500zM5 0L.5 6h2.700L2.500 10l4.500-6H4.500z" /></svg>
      <div class="clock">
        {@render tx('15:14', 36, 'small')}
        {@render tx('21.01.2024', 73, 'small')}
      </div>
      <svg class="bell" width="18" height="20" viewBox="0 0 18 20"><path d="M9 .5q6.500.3 6.500 7v5L17.500 16H.5l2-3.500v-5q0-6.700 6.500-7zM6 17.300h6q-.8 2-3 2t-3-2z" /></svg>
    </div>
  </footer>
</div>

<style>
  :global(body) { margin: 0; }
  .screen {
    position: relative;
    width: 1920px;
    height: 1080px;
    overflow: hidden;
    display: flex;
    flex-direction: column;
    background: #fff;
    color: #1f2328;
    font-family: 'Open Sans', 'Noto Sans', sans-serif;
    font-size: 16.4px;
    line-height: 1.3;
  }
  .screen * { box-sizing: border-box; }
  svg { flex: none; display: block; }
  .t { display: inline-block; flex: none; white-space: pre; padding-top: 2px; }
  .small { font-size: 14px; }
  .semi { font-weight: 600; }
  .muted { color: #656d76; }
  .grey { color: #5a5d63; }
  .link { color: #0969da; }
  .ital { font-style: italic; font-size: 18.7px; }
  .name { font-size: 23.4px; font-weight: 600; }
  .h1 { font-size: 37.4px; font-weight: 600; }
  .h2 { font-size: 18.4px; font-weight: 600; }
  .ico { width: 20px; height: 20px; fill: #656d76; }
  .ico.dark { fill: #24292f; }
  .avatar { border-radius: 50%; border: 1px solid #dcdee1; }
  .a41 { width: 42px; height: 42px; }
  .a31 { width: 32px; height: 32px; }
  .a27 { width: 27px; height: 27px; }

  .tabbar { height: 55px; flex: none; display: flex; align-items: center; background: #f0eff4; color: #15141a; }
  .view { width: 54px; height: 55px; margin-right: 2.5px; padding-left: 14px; display: flex; align-items: center; border-right: 1px solid #b9b9c0; }
  .i22 { width: 22px; height: 22px; }
  .tab { position: relative; width: 257.4px; height: 55px; padding: 0 14px 0 12px; display: flex; align-items: center; flex: none; font-size: 14px; z-index: 0; }
  .tab.active::before { content: ''; position: absolute; z-index: -1; left: 2.5px; right: 3px; top: 5px; bottom: 5px; background: #fff; border-radius: 5px; box-shadow: 0 0 5px rgba(0, 0, 0, .4); }
  .fav { width: 20px; height: 20px; margin-right: 7px; border-radius: 50%; flex: none; }
  .ya { background: #fc3f1d; color: #fff; font-size: 14px; line-height: 19px; text-align: center; }
  .metrica { overflow: hidden; }
  .title { flex: 1; overflow: hidden; display: flex; height: 24px; align-items: center; padding-top: 1px; }
  .title.fade { mask-image: linear-gradient(90deg, #000 calc(100% - 32px), transparent 100%); }
  .close { width: 12px; height: 12px; margin: 0 4px; stroke: #15141a; stroke-width: 1.4; fill: none; }
  .cell { display: flex; justify-content: center; flex: none; }
  .c43 { width: 43px; }
  .c59 { width: 59px; }
  .line { stroke: #5b5b66; stroke-width: 1.6; fill: none; }
  .window { display: flex; gap: 43px; margin-left: 67px; }
  .window svg { fill: none; stroke: #15141a; stroke-width: 1.2; }

  .toolbar { height: 51px; flex: none; display: flex; align-items: center; padding-bottom: 1px; border-bottom: 1px solid #cccccf; background: #f9f9fb; }
  .toolbar svg { fill: none; stroke: #5b5b66; stroke-width: 1.6; stroke-linejoin: round; stroke-linecap: round; }
  .toolbar .solid { fill: #5b5b66; stroke: none; }
  .nav-buttons { width: 289px; padding: 1px 0 0 21px; display: flex; align-items: center; gap: 26.500px; }
  .nav-buttons .off { opacity: .4; }
  .url { width: 1297px; height: 40px; border-radius: 5px; background: #f0f0f4; display: flex; align-items: center; padding: 0 9px 0 10px; }
  .shieldy { margin-right: 17px; }
  .address { margin-left: 14px; padding-top: 5px; font-size: 17.6px; color: #84848a; }
  .address b { font-weight: 400; color: #15141a; }
  .fav-star { margin-left: auto; }
  .tools { display: flex; gap: 25.200px; margin-left: 159px; }

  header { height: 130px; flex: none; background: #f6f8fa; border-bottom: 1px solid #d0d7de; }
  .top { height: 80px; display: flex; align-items: center; padding-left: 20px; }
  .sq { width: 40px; height: 40px; margin-right: 10px; display: flex; align-items: center; justify-content: center; border: 1px solid #d0d7de; border-radius: 7px; flex: none; }
  .logo { width: 40px; height: 40px; margin-left: 10px; fill: #1f2328; }
  .crumb { display: flex; gap: 10px; margin-left: 20px; width: 1024px; padding-top: 1px; }
  .search { width: 438px; height: 40px; border: 1px solid #d0d7de; border-radius: 7px; display: flex; align-items: center; padding-left: 9px; }
  .search .ico { margin-right: 10px; }
  .slash { width: 15px; height: 20px; margin: 2px 5px 0 4px; border: 1px solid #656d76; border-radius: 4px; font-size: 12px; line-height: 18px; text-align: center; color: #656d76; }
  .cmd { height: 20px; margin-left: auto; padding-left: 10px; border-left: 1px solid #d0d7de; }
  .search .cmd .ico { margin-right: 9px; }
  .vline { width: 1px; height: 25px; margin: 0 15px; background: #d0d7de; }
  .add { width: 67px; gap: 5px; }
  .top .a41 { margin-left: -1px; }
  nav { display: flex; padding-left: 20px; height: 50px; }
  .slot { flex: none; }
  .item { width: max-content; height: 50px; padding: 0 10px 8px; display: flex; align-items: center; gap: 10px; }
  .item .ico { margin-top: 2px; }
  .item .t { padding-top: 2px; }
  .item.on { width: 91px; border-bottom: 2px solid #fd8c73; padding-bottom: 6px; }

  main { width: 1520px; margin-left: 200px; height: 784px; flex: none; overflow: hidden; }
  .repo { height: 79px; display: flex; align-items: center; padding-bottom: 3px; border-bottom: 1px solid #d0d7de; }
  .repo .a31 { margin-left: -1px; }
  .repo .name { margin-left: 9px; padding-top: 5px; }
  .pill { width: 60px; height: 25px; margin: 1px 0 0 9px; border: 1px solid #d0d7de; border-radius: 13px; display: flex; align-items: center; justify-content: center; }
  .pill .t { padding-top: 2px; }
  .btn .small { padding-top: 1px; }
  .actions { display: flex; gap: 10px; margin: 0 10px 0 auto; }
  .btn { height: 35px; border: 1px solid #d5d8dc; border-radius: 7px; background: #f6f8fa; display: flex; align-items: center; box-shadow: 0 1px 0 rgba(31, 35, 40, .04); flex: none; }
  .pin { width: 82px; padding-left: 15px; gap: 10px; }
  .watch { width: 163px; padding-left: 15px; gap: 4px; }
  .watch .count { margin-left: 1px; }
  .watch .ico.dark { margin: 2px 0 0 1px; }
  .count { min-width: 25px; height: 25px; border-radius: 13px; background: #e4e8ea; font-size: 14px; line-height: 25px; text-align: center; flex: none; }
  .pale { background: #eff1f3; margin-left: 5px; }
  .half { width: 121px; height: 33px; display: flex; align-items: center; padding-left: 15px; }
  .half .small { margin: 0 6px 0 11px; }
  .half.dim { width: 120px; color: #8c959f; }
  .half.starred .small { margin: 0 5px 0 14px; }
  .half.dim .ico { fill: #8c959f; }
  .drop { width: 41px; height: 33px; border-left: 1px solid #d5d8dc; display: flex; align-items: center; justify-content: center; }

  .columns { display: flex; gap: 30px; padding-top: 30px; }
  .left { width: 1120px; }
  .bar { display: flex; height: 40px; align-items: center; }
  .big { height: 40px; }
  .branch { width: 130px; padding-left: 15px; }
  .branch .t { margin: 0 9px 0 10px; }
  .refs { width: 436px; display: flex; align-items: center; padding-left: 16px; }
  .refs .semi { margin-left: 4px; }
  .refs .muted { margin-left: 3px; }
  .tagref { display: flex; align-items: center; margin-left: 12px; }
  .tagref .semi { margin-left: 5px; }
  .tagref .muted { margin-left: 4px; }
  .goto { width: 290px; height: 40px; border: 1px solid #d0d7de; border-radius: 7px; display: flex; align-items: center; padding: 0 8px 0 15px; }
  .goto .t { margin-left: 10px; }
  kbd { width: 22px; height: 22px; margin: 3px 0 0 auto; border: 1px solid #e2e6ea; border-bottom-width: 2px; border-radius: 6px; background: #f6f8fa; font: 14px/20px 'Liberation Mono', 'DejaVu Sans Mono', monospace; text-align: center; }
  .addfile { width: 116px; margin-left: 10px; padding-left: 15px; gap: 9px; }
  .green { width: 128px; margin-left: 10px; padding-left: 15px; background: #1f883d; border-color: #1f7f3a; color: #fff; gap: 10px; }
  .green .ico { fill: #fff; }
  .green .ico:first-child { margin-top: -2px; }
  .green .ico:last-child { margin-left: -1px; }

  .box { margin-top: 20px; border: 1px solid #d0d7de; border-radius: 7px; overflow: hidden; height: 220px; }
  .latest { height: 65px; background: #f6f8fa; display: flex; align-items: center; padding: 0 35px 0 25px; }
  .latest .semi { margin-left: 9px; }
  .latest .muted { margin-left: 9px; }
  .dots { margin: 0 0 3px 19px; }
  .latest .ok { margin: 0 0 2px 25px; }
  .ok { fill: #1a7f37; }
  .right { margin-left: auto; display: flex; align-items: center; }
  .right .t { padding-top: 1px; }
  .right .ico { margin: 0 5px 2px 20px; }
  .row { height: 51px; border-top: 1px solid #d0d7de; display: flex; align-items: center; padding: 0 19.500px 0 20px; }
  .row .t { padding-top: 1px; }
  .folder { fill: #54aeff; }
  .fname { margin-left: 12.500px; width: 415px; }
  .fmsg { flex: 1; }
  .readme { height: 206px; }
  .rhead { height: 61px; border-bottom: 1px solid #d0d7de; display: flex; align-items: center; justify-content: space-between; padding: 0 27px 0 10px; }
  .rtab { height: 60px; width: 120px; padding-left: 10px; display: flex; align-items: center; gap: 10px; border-bottom: 2px solid #fd8c73; }
  .rtab .ico { margin-top: 1px; }
  .rtab .t { padding-top: 4px; }
  .rbody { padding: 40px 40px 0; }
  h1 { margin: 0; height: 63px; border-bottom: 1px solid #d8dee4; font-size: 37.4px; line-height: 49px; display: flex; align-items: flex-start; }

  aside { width: 370px; }
  .about { height: 40px; display: flex; align-items: center; justify-content: space-between; }
  .desc { height: 40px; margin-top: 10px; display: flex; align-items: center; }
  ul { list-style: none; margin: 10px 0 0; padding: 0; height: 196px; }
  li { height: 36.500px; display: flex; align-items: center; }
  li .ico { margin: 1px 15px 0 0; }
  li .t { padding-top: 0; }
  li .semi { margin-right: 3px; }
  .side { height: 136px; border-top: 1px solid #d8dee4; padding-top: 16px; }
  .sh { height: 40px; display: flex; align-items: center; margin-bottom: 14px; }
  .sh .t { padding-top: 0; }
  .sl { height: 23px; display: flex; align-items: center; }
  .sl .t { padding-top: 2px; }
  .under { border-bottom: 1px solid #0969da; height: 21px; display: flex; align-items: center; }
  .deploy { display: flex; align-items: center; margin-top: 3px; height: 22px; }
  .deploy .semi { margin: 0 5px 0 10px; }
  .deploy .t { padding-top: 1px; }
  .scroll { position: absolute; left: 1914px; top: 121px; width: 2px; height: 619px; background: #8c8c90; }

  footer { height: 60px; flex: none; display: flex; align-items: center; border-top: 1px solid #acb3c2; background: linear-gradient(90deg, #e1ecf7 0, #e2ecf8 340px, #d3e2fa 430px, #d7ddf6 530px, #d5dff7 650px, #d2e2f9 780px, #d6def5 930px, #d6daee 1110px, #d5dff5 1250px, #d7def0 1380px, #e1e9f6 1530px, #dfebf8 1920px); }
  .weather { width: 585px; padding: 0 0 2px 24px; display: flex; align-items: center; gap: 8px; }
  .weather svg { margin-top: -3px; }
  .wtext { display: flex; flex-direction: column; align-items: flex-start; gap: 1px; }
  .wtext .t { padding: 0; line-height: 19px; }
  .wtext .grey { color: #5f6368; }
  .apps { display: flex; align-items: center; height: 59px; width: 967px; padding-bottom: 1px; }
  .start { margin-left: -.5px; }
  .find { width: 274px; height: 39px; margin: 0 6px 0 17px; border-radius: 20px; border: 1px solid #c3cbe0; border-bottom-color: #a9b2c8; background: #f3f6fd; display: flex; align-items: center; padding-left: 13px; flex: none; }
  .search-word { margin-left: 12px; padding-top: 1px; }
  .squirrel { margin-left: auto; margin-right: 2px; }
  .app { position: relative; width: 48px; height: 48px; margin-right: 7px; display: flex; align-items: center; justify-content: center; border-radius: 5px; flex: none; }
  .nudge { margin-left: -2px; }
  .current { background: #ecf0fa; box-shadow: 0 0 0 1px #dfe3f0; }
  .dot { position: absolute; bottom: 0; width: 8px; height: 4px; border-radius: 2px; background: #7e828c; }
  .line-on { position: absolute; bottom: 0; width: 20px; height: 4px; border-radius: 2px; background: #0a78d4; }
  .tray { display: flex; align-items: center; padding: 0 0 2px 8px; }
  .tray svg { fill: none; stroke: #1b1b1b; margin-right: 9px; }
  .tray .fill { fill: #1b1b1b; stroke: none; }
  .tray .up { margin-right: 24px; }
  .tray .mic { stroke: #0b4ba8; margin-right: 27px; }
  .lang { margin-right: 24px; }
  .clock { width: 83px; display: flex; flex-direction: column; align-items: flex-end; gap: 1px; }
  .clock .t { padding: 0; line-height: 19px; }
  .tray .bell { fill: #003f92; stroke: none; margin: 2px 0 0 10px; }
</style>
